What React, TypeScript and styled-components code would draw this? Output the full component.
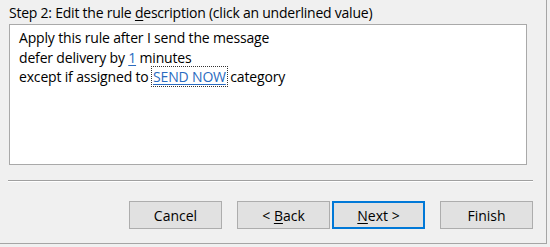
import React from "react";
import styled, { createGlobalStyle } from "styled-components";

const GlobalStyle = createGlobalStyle`
  html, body {
    margin: 0;
    padding: 0;
    background: #f0f0f0;
  }
  body {
    font-family: "Open Sans", "Noto Sans", sans-serif;
    color: #000;
  }
`;

const Window = styled.div`
  width: 547px;
  height: 244px;
  box-sizing: border-box;
  border-right: 1px solid #a5a5a5;
  border-bottom: 1px solid #a5a5a5;
  background: #f0f0f0;
  display: flex;
  flex-direction: column;
`;

const StepTitle = styled.div`
  font-size: 14px;
  line-height: 18px;
  padding: 4px 0 0 9px;
  height: 20px;
  letter-spacing: -0.23px;
`;

const Mnemonic = styled.span`
  text-decoration: underline;
  text-underline-offset: 2px;
`;

const DescriptionBox = styled.div`
  margin: 0 19px 0 9px;
  height: 141px;
  box-sizing: border-box;
  background: #fff;
  border: 1px solid #a9a9a9;
  padding: 3px 0 0 9px;
  font-size: 14px;
  line-height: 19.5px;
  letter-spacing: -0.17px;
`;

const Line = styled.div`
  white-space: nowrap;
`;

const ValueLink = styled.span<{ $focused?: boolean }>`
  color: #2a6bbf;
  text-decoration: underline;
  text-underline-offset: 2px;
  outline: ${(p) => (p.$focused ? "1px dotted #333" : "none")};
  outline-offset: 0;
  padding: 0 ${(p) => (p.$focused ? "1px" : "0")};
`;

const Separator = styled.div`
  margin: 15px 13px 0 8px;
  height: 0;
  border-top: 1px solid #a0a0a0;
  border-bottom: 1px solid #ffffff;
`;

const ButtonRow = styled.div`
  display: flex;
  padding: 19px 0 0 129px;
  gap: 15px;
`;

const ButtonPair = styled.div`
  display: flex;
  gap: 2px;
`;

const DialogButton = styled.button<{ $default?: boolean }>`
  width: 93px;
  height: 28px;
  box-sizing: border-box;
  background: #e1e1e1;
  border: ${(p) => (p.$default ? "2px solid #0078d7" : "1px solid #adadad")};
  font-family: "Open Sans", "Noto Sans", sans-serif;
  font-size: 14px;
  color: #000;
  padding: 0;
  display: flex;
  align-items: center;
  justify-content: center;
`;

export default function App() {
  return (
    <>
      <GlobalStyle />
      <Window>
        <StepTitle>
          Step 2: Edit the rule <Mnemonic>d</Mnemonic>escription (click an underlined value)
        </StepTitle>
        <DescriptionBox>
          <Line>Apply this rule after I send the message</Line>
          <Line>
            defer delivery by <ValueLink>1</ValueLink> minutes
          </Line>
          <Line>
            except if assigned to <ValueLink $focused>SEND NOW</ValueLink> category
          </Line>
        </DescriptionBox>
        <Separator />
        <ButtonRow>
          <DialogButton>Cancel</DialogButton>
          <ButtonPair>
            <DialogButton>
              &lt;&nbsp;<Mnemonic>B</Mnemonic>ack
            </DialogButton>
            <DialogButton $default>
              <Mnemonic>N</Mnemonic>ext &gt;
            </DialogButton>
          </ButtonPair>
          <DialogButton>Finish</DialogButton>
        </ButtonRow>
      </Window>
    </>
  );
}
